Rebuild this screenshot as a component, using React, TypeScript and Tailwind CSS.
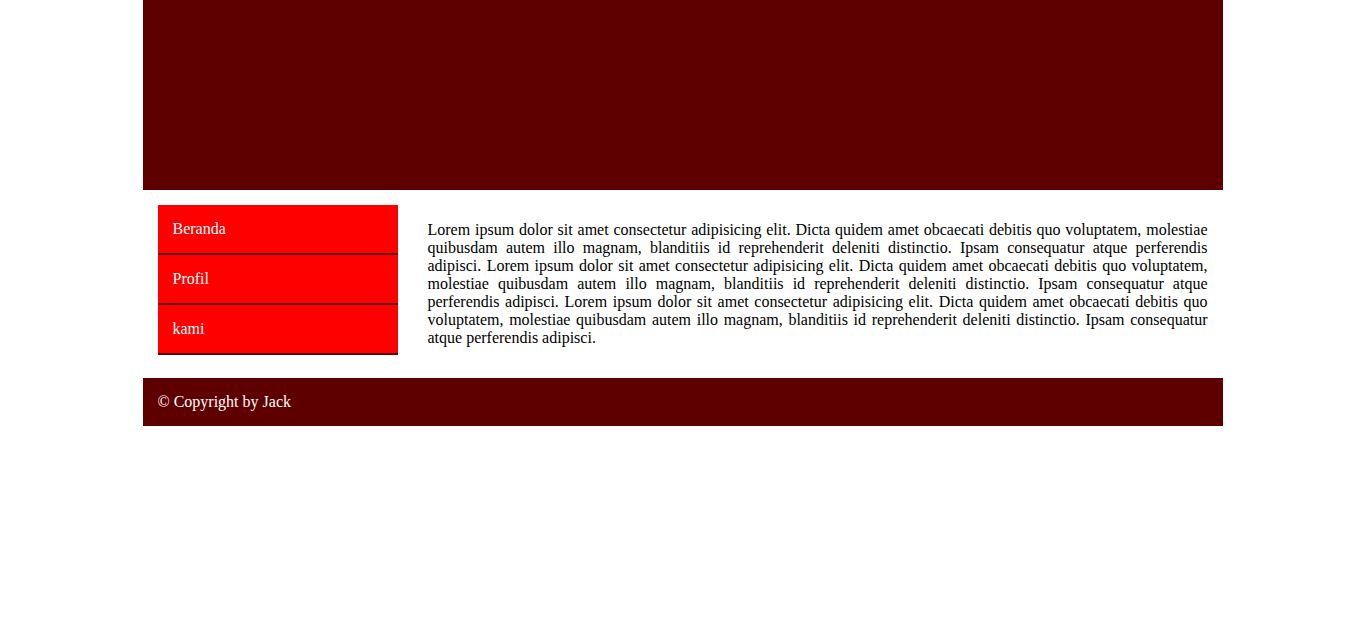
const lorem =
  'Lorem ipsum dolor sit amet consectetur adipisicing elit. Dicta quidem amet obcaecati debitis quo voluptatem, molestiae quibusdam autem illo magnam, blanditiis id reprehenderit deleniti distinctio. Ipsam consequatur atque perferendis adipisci.';

const menu = ['Beranda', 'Profil', 'kami'];

export default function App() {
  return (
    <div className="min-h-screen bg-white pl-[6px] font-['Liberation_Serif',serif] text-[16px] text-black">
      <div className="mx-auto w-[1080px]">
        {/* Header */}
        <header className="h-[190px] bg-[#5f0000]" />

        {/* Main */}
        <div className="flex items-start px-[15px] pt-[15px] pb-[15px]">
          <aside className="w-[240px] shrink-0">
            <ul>
              {menu.map((item) => (
                <li
                  key={item}
                  className="h-[50px] border-b-2 border-[#5f0000] bg-[#ff0000] px-[15px] pt-[15px] leading-[18px] text-white"
                >
                  {item}
                </li>
              ))}
            </ul>
          </aside>
          <main className="ml-[30px] flex-1">
            <p className="my-4 text-justify leading-[18px]">
              {lorem} {lorem} {lorem}
            </p>
          </main>
        </div>

        {/* Footer */}
        <footer className="h-[48px] bg-[#5f0000] px-[15px] pt-[15px] leading-[18px] text-white">
          © Copyright by Jack
        </footer>
      </div>
    </div>
  );
}
